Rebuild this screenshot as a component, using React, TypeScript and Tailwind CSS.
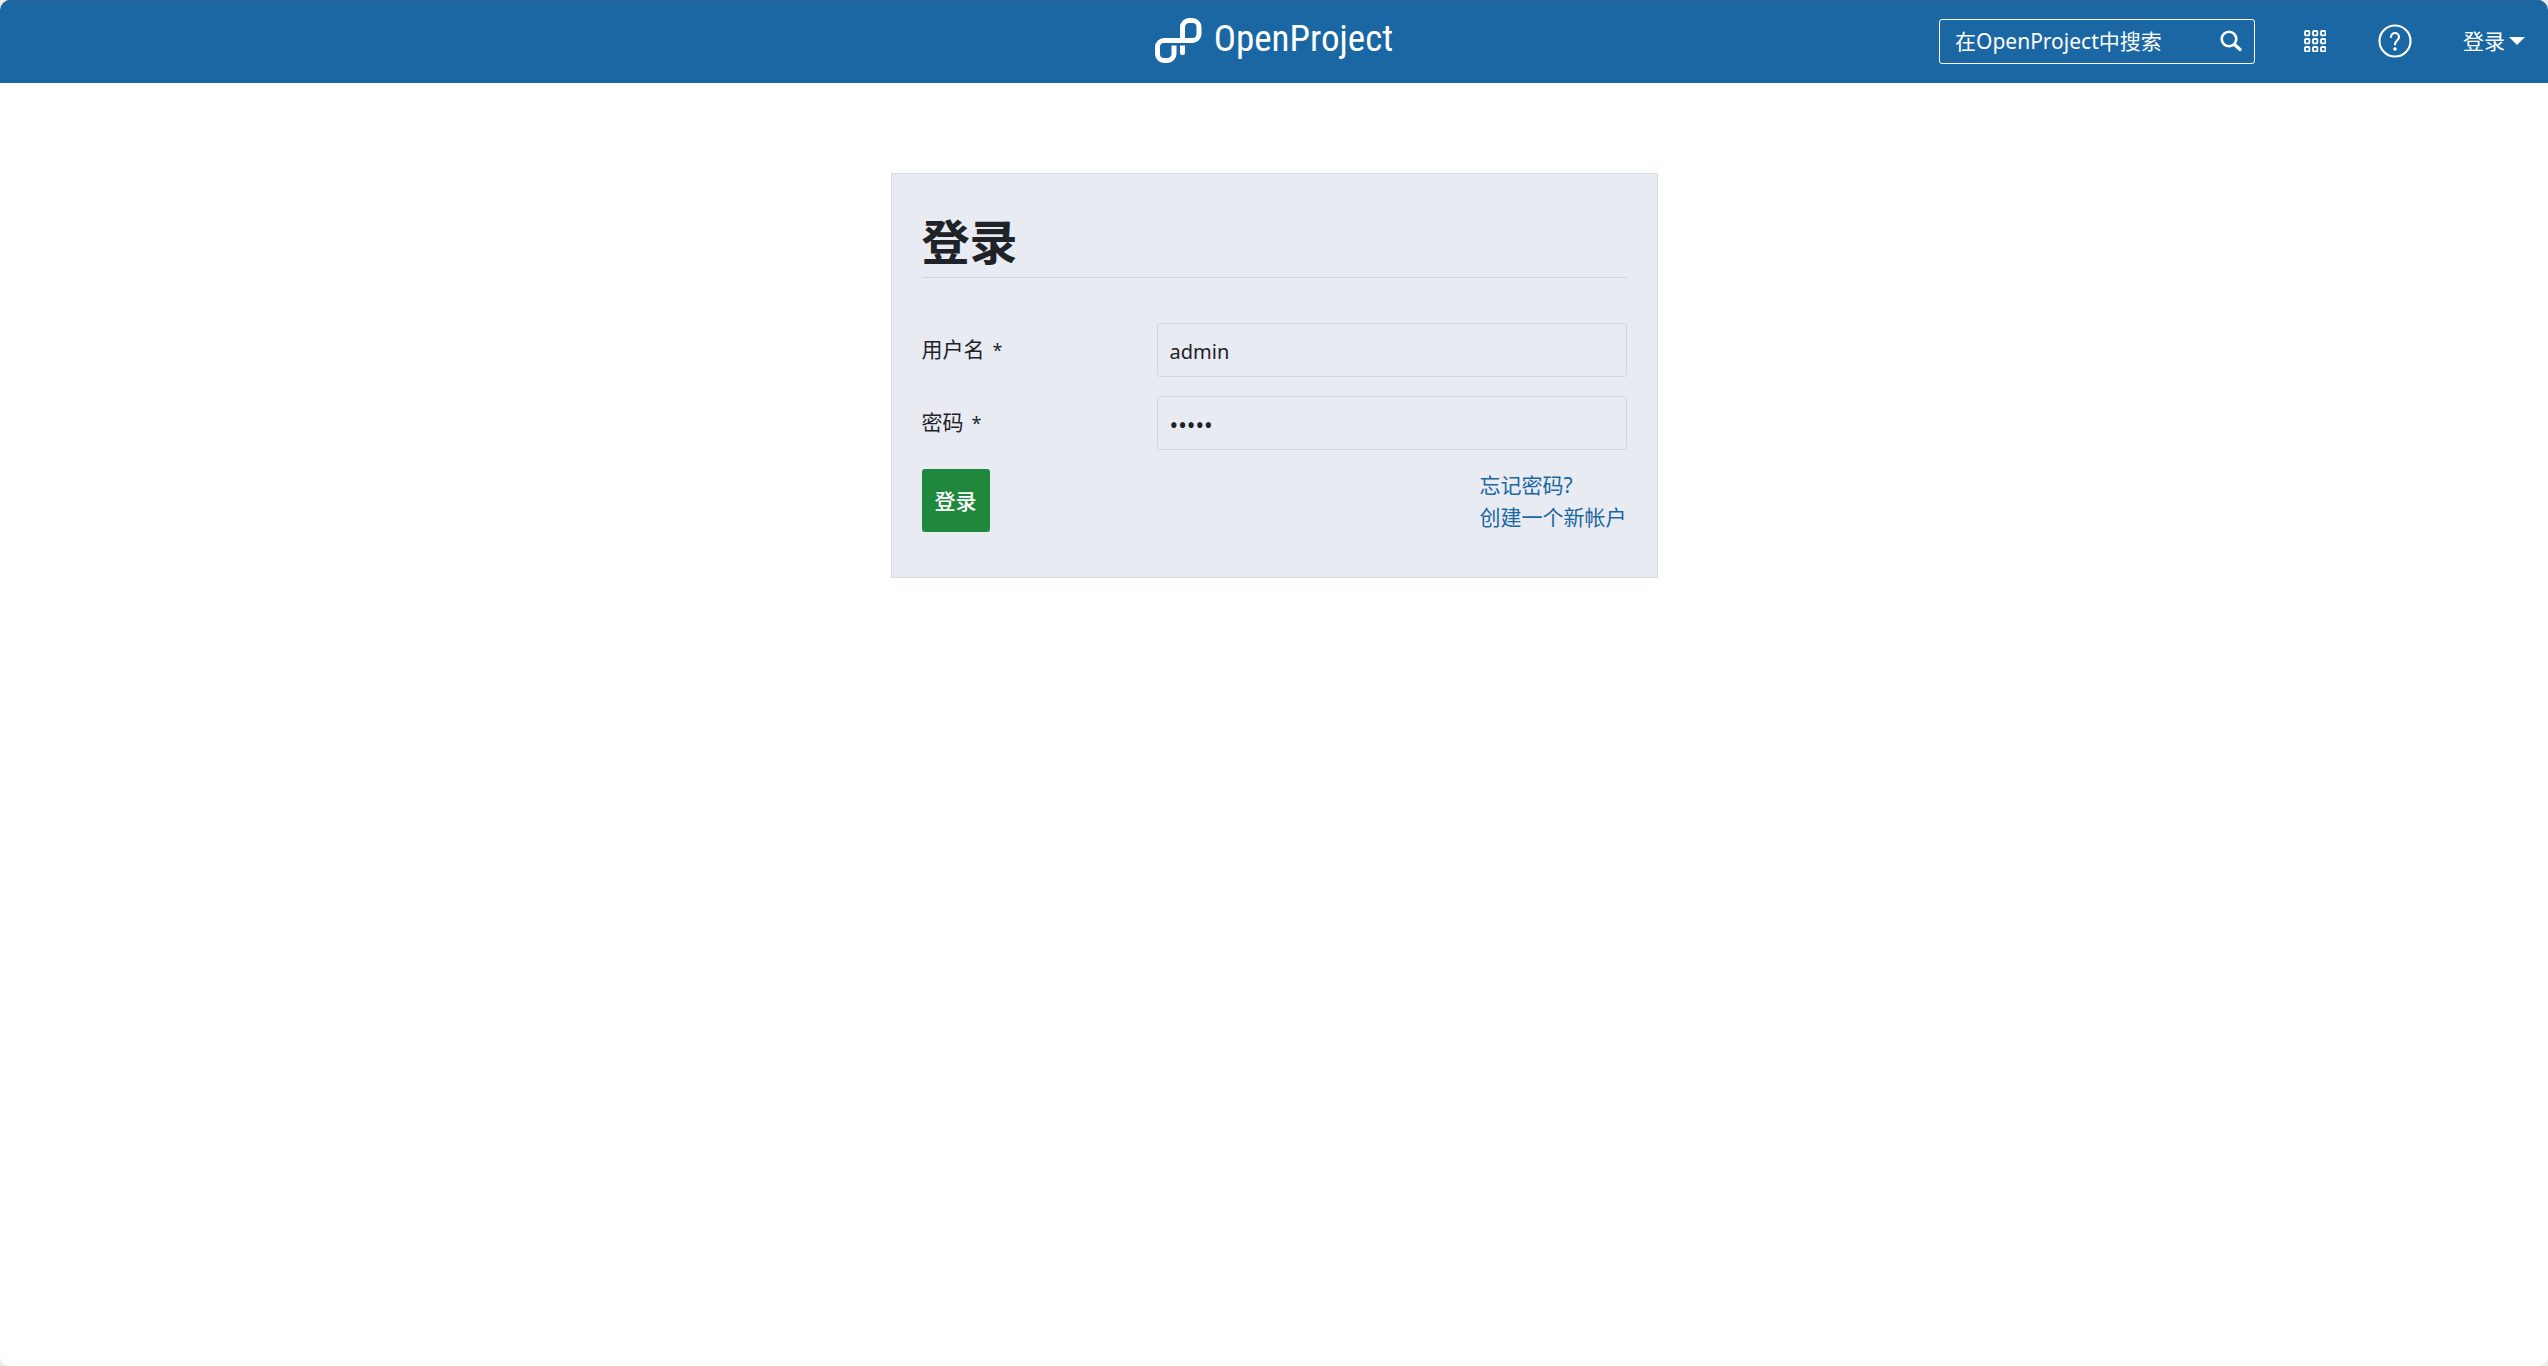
import React from 'react';

function LogoMark() {
  return (
    <svg className="h-[45px] w-[47px]" viewBox="0 0 47 45" fill="none" stroke="#fff" strokeWidth="5" aria-hidden="true">
      <path d="M27.500 22.500V9a6.500 6.500 0 0 1 6.500-6.500h3.500a6.500 6.500 0 0 1 6.500 6.500v7a6.500 6.500 0 0 1-6.500 6.500H9a6.500 6.500 0 0 0-6.500 6.500v7a6.500 6.500 0 0 0 6.500 6.500h3.500a6.500 6.500 0 0 0 6.500-6.500V27.500" />
      <path d="M25 27.500h5v7.500a2 2 0 0 1-2 2h-1a2 2 0 0 1-2-2z" fill="#fff" stroke="none" />
    </svg>
  );
}

function GridIcon() {
  const offsets = [1, 9, 17];
  return (
    <svg className="size-[22px]" viewBox="0 0 22 22" fill="none" stroke="#fff" strokeWidth="1.800" aria-hidden="true">
      {offsets.map((y) =>
        offsets.map((x) => <rect key={`${x}-${y}`} x={x} y={y} width="4.400" height="4.400" rx="1" />),
      )}
    </svg>
  );
}

function HelpIcon() {
  return (
    <svg className="size-[34px]" viewBox="0 0 34 34" fill="none" stroke="#fff" strokeWidth="2.200" aria-hidden="true">
      <circle cx="17" cy="17" r="15.500" />
      <path d="M13 13a4 4 0 0 1 8 0c0 3.500-4 3.700-4 7.500" strokeLinecap="round" />
      <circle cx="17" cy="25" r="1.800" fill="#fff" stroke="none" />
    </svg>
  );
}

function SearchIcon() {
  return (
    <svg className="size-[22px]" viewBox="0 0 22 22" fill="none" stroke="#fff" aria-hidden="true">
      <circle cx="9" cy="9" r="7.300" strokeWidth="2.600" />
      <path d="M14.500 14.500l5.500 5" strokeWidth="3.200" strokeLinecap="round" />
    </svg>
  );
}

type FieldProps = { id: string; label: string; type: string; value: string; inputClass: string };

function Field({ id, label, type, value, inputClass }: FieldProps) {
  return (
    <div className="grid grid-cols-3 items-center">
      <label htmlFor={id}>
        {label}
        <span className="ml-2 text-lg">*</span>
      </label>
      <input
        id={id}
        type={type}
        defaultValue={value}
        required
        className={`col-span-2 h-[54px] rounded-[3px] border border-[#d1d7e0] bg-transparent px-3 outline-none ${inputClass}`}
      />
    </div>
  );
}

export default function App() {
  return (
    <div className="min-h-screen bg-[#eeeeee] font-['Noto_Sans','Noto_Sans_CJK_SC',sans-serif] text-[21px] text-[#1f2328]">
      <div className="min-h-screen overflow-hidden rounded-[10px] bg-white">
        <header className="grid h-[83px] grid-cols-[1fr_auto_1fr] items-center border-t border-[#2f6491] bg-[#1a67a3] pb-0.5 text-white">
          <div />
          <a href="#" className="flex items-center gap-3 pb-0.5" aria-label="OpenProject">
            <LogoMark />
            <span className="pb-1 font-['Roboto_Condensed','Roboto',sans-serif] text-[37px] leading-none">
              OpenProject
            </span>
          </a>
          <nav className="flex items-center justify-end pr-[23px]">
            <form className="flex h-[45px] w-[316px] items-center rounded-[3px] border border-white pr-3 pl-[15px]">
              <input
                type="search"
                aria-label="在OpenProject中搜索"
                placeholder="在OpenProject中搜索"
                className="min-w-0 flex-1 bg-transparent pt-0.5 outline-none placeholder:text-white"
              />
              <button type="button" aria-label="搜索">
                <SearchIcon />
              </button>
            </form>
            <button type="button" aria-label="模块" className="ml-[49px]">
              <GridIcon />
            </button>
            <button type="button" aria-label="帮助" className="ml-[52px]">
              <HelpIcon />
            </button>
            <button type="button" className="ml-[51px] flex items-center gap-1">
              <span className="pt-0.5">登录</span>
              <svg className="h-2 w-4" viewBox="0 0 16 8" fill="#fff" aria-hidden="true">
                <path d="M0 0h16l-8 8z" />
              </svg>
            </button>
          </nav>
        </header>
        <main className="px-4 pt-[90px]">
          <section className="mx-auto max-w-[767px] border border-[#d5dae4] bg-[#e8ebf2] px-[30px] pb-[44px]">
            <h1 className="mb-[45px] border-b border-[#d1d5e0] pt-[33px] text-5xl leading-[70px] font-bold">登录</h1>
            <form>
              <div className="flex flex-col gap-[19px]">
                <Field id="username" label="用户名" type="text" value="admin" inputClass="pt-0.5 text-xl" />
                <Field id="password" label="密码" type="password" value="admin" inputClass="pt-1 text-[23px]" />
              </div>
              <div className="mt-[19px] flex items-start justify-between">
                <button
                  type="submit"
                  className="h-[63px] rounded-[3px] bg-[#1f883d] px-[13px] pt-0.5 font-medium text-white"
                >
                  登录
                </button>
                <div className="flex flex-col leading-8 text-[#1a67a3]">
                  <a href="#">忘记密码?</a>
                  <a href="#">创建一个新帐户</a>
                </div>
              </div>
            </form>
          </section>
        </main>
      </div>
    </div>
  );
}
